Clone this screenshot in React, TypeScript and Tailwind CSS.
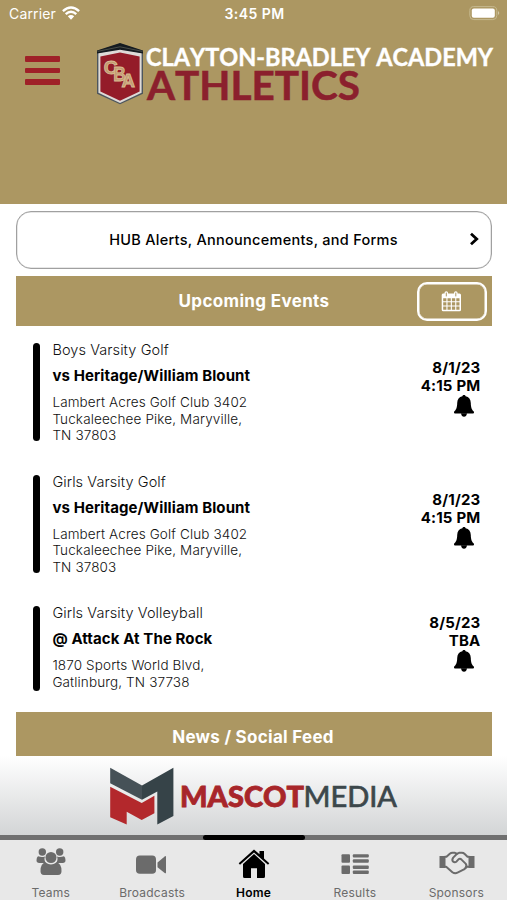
import React from "react";

type GameEvent = {
  team: string;
  opponent: string;
  address: string[];
  date: string;
  time: string;
  rowSize: string;
  dateOffset: string;
};

const events: GameEvent[] = [
  {
    team: "Boys Varsity Golf",
    opponent: "vs Heritage/William Blount",
    address: ["Lambert Acres Golf Club 3402", "Tuckaleechee Pike, Maryville,", "TN 37803"],
    date: "8/1/23",
    time: "4:15 PM",
    rowSize: "h-[98px] mb-[33.5px]",
    dateOffset: "pt-4",
  },
  {
    team: "Girls Varsity Golf",
    opponent: "vs Heritage/William Blount",
    address: ["Lambert Acres Golf Club 3402", "Tuckaleechee Pike, Maryville,", "TN 37803"],
    date: "8/1/23",
    time: "4:15 PM",
    rowSize: "h-[98px] mb-[33.5px]",
    dateOffset: "pt-4",
  },
  {
    team: "Girls Varsity Volleyball",
    opponent: "@ Attack At The Rock",
    address: ["1870 Sports World Blvd,", "Gatlinburg, TN 37738"],
    date: "8/5/23",
    time: "TBA",
    rowSize: "h-[85px] mb-[21px]",
    dateOffset: "pt-[8px]",
  },
];

function Bell() {
  return (
    <svg width="22" height="22" viewBox="0 0 22 22" className="mr-[5.5px] fill-black">
      <path d="M11 0C12 0 12.6.7 12.6 1.3C16 2 17.7 4.6 17.8 8C17.9 12.7 18.8 14.8 21 16.8V17.6Q21 18.6 20 18.6H2Q1 18.6 1 17.6V16.8C3.2 14.8 4.1 12.7 4.2 8C4.3 4.6 6 2 9.4 1.3C9.4.7 10 0 11 0Z" />
      <path d="M8 18.3H14C13.7 20.8 12.5 21.8 11 21.8S8.3 20.8 8 18.3Z" />
    </svg>
  );
}

function Calendar() {
  return (
    <svg width="21" height="21" viewBox="0 0 21 21" className="block">
      <path
        fillRule="evenodd"
        fill="#fff"
        d="M2 2.6H3.5V2A1.8 1.8 0 0 1 7.1 2V2.6H13V2A1.8 1.8 0 0 1 16.6 2V2.6H18.5A1.5 1.5 0 0 1 20 4.1V18.7A1.5 1.5 0 0 1 18.5 20.2H2.2A1.5 1.5 0 0 1 .7 18.7V4.1A1.5 1.5 0 0 1 2 2.6ZM2.2 7.3V10.2H5.4V7.3ZM6.5 7.3V10.2H9.8V7.3ZM10.9 7.3V10.2H14.2V7.3ZM15.3 7.3V10.2H18.5V7.3ZM2.2 11.3V14.4H5.4V11.3ZM6.5 11.3V14.4H9.8V11.3ZM10.9 11.3V14.4H14.2V11.3ZM15.3 11.3V14.4H18.5V11.3ZM2.2 15.5V18.7H5.4V15.5ZM6.5 15.5V18.7H9.8V15.5ZM10.9 15.5V18.7H14.2V15.5ZM15.3 15.5V18.7H18.5V15.5Z"
      />
      <path d="M5.3 2V5M14.8 2V5" stroke="#ac9762" strokeWidth="1" strokeLinecap="round" />
    </svg>
  );
}

function AcademyLogo() {
  return (
    <svg width="400" height="72" viewBox="96 42 400 72" className="block overflow-visible">
      <path d="M97 51L120 43.5L143 51V93.8L120 104.3L97 93.8Z" fill="#4d565d" />
      <path d="M98.4 53L120 48.5L141.6 53V92.7L120 102.9L98.4 92.7Z" fill="#dedbd8" />
      <path d="M97 50.4L120 43L143 50.4V53.6L120 49.8L97 53.6Z" fill="#151b20" />
      <path d="M97.5 51.4L120 46.8L142.5 51.4" fill="none" stroke="#6b6e64" strokeWidth="0.6" />
      <path d="M100.4 56.4L120 52.5L139.6 56.4V91.4L120 100.7L100.4 91.4Z" fill="#941c29" />
      <g fontFamily="Liberation Sans, sans-serif" fontWeight="700" fill="#c29a70" stroke="#d9bd94" strokeWidth="0.9">
        <text x="103.8" y="74.3" fontSize="19" textLength="14" lengthAdjust="spacingAndGlyphs">C</text>
        <text x="113.2" y="81" fontSize="20" textLength="12.5" lengthAdjust="spacingAndGlyphs">B</text>
        <text x="121.5" y="87.3" fontSize="19" textLength="13.5" lengthAdjust="spacingAndGlyphs">A</text>
      </g>
      <g fontFamily="Lato, sans-serif" fontWeight="700" style={{ fontKerning: "none" }}>
        <text x="146" y="66.3" fontSize="24.3" fill="#fff" stroke="#fff" strokeWidth="0.4" textLength="347" lengthAdjust="spacingAndGlyphs">
          CLAYTON-BRADLEY ACADEMY
        </text>
        <text x="147" y="100" fontSize="39.5" fill="#8b202d" stroke="#8b202d" strokeWidth="0.5" textLength="213" lengthAdjust="spacingAndGlyphs">
          ATHLETICS
        </text>
      </g>
    </svg>
  );
}

function MascotLogo() {
  return (
    <svg width="290" height="60" viewBox="109 766 290 60" className="block">
      <path d="M110.2 767.7L142 785.5V799.8L110.2 783.3Z" fill="#465157" />
      <path d="M142 785.5L173.4 767.7V816L157.3 824.4V791.6L142 799.8Z" fill="#364348" />
      <path d="M110.2 786.8L141.7 803L154.4 795.8V813.3L141.7 820L126.7 811.7V824.4L110.2 817.3Z" fill="#b3282c" />
      <text x="180" y="806.5" fontFamily="Lato, sans-serif" fontWeight="900" fontSize="28.3" fill="#a8262a" stroke="#a8262a" strokeWidth="0.8" textLength="124" lengthAdjust="spacingAndGlyphs" style={{ fontKerning: "none" }}>
        MASCOT
      </text>
      <text x="303.5" y="806.5" fontFamily="Lato, sans-serif" fontWeight="400" fontSize="28.3" fill="#3c474b" stroke="#3c474b" strokeWidth="0.7" textLength="93.5" lengthAdjust="spacingAndGlyphs">
        MEDIA
      </text>
    </svg>
  );
}

function TeamsIcon() {
  return (
    <svg width="30" height="28" viewBox="0 0 30 28" fill="currentColor" className="ml-px">
      <circle cx="6.3" cy="4" r="3.7" />
      <circle cx="23.7" cy="4" r="3.7" />
      <path d="M2 8.3Q6 9.5 9 8.4Q7.5 12.3 10.2 15H3.2Q.5 15 .5 12.3Q.5 9.3 2 8.3Z" />
      <path d="M28 8.3Q24 9.5 21 8.4Q22.5 12.3 19.8 15H26.8Q29.5 15 29.5 12.3Q29.5 9.3 28 8.3Z" />
      <circle cx="15" cy="9.5" r="5.5" />
      <path d="M9.6 14.6Q15 18.3 20.4 14.6Q25.5 15 25.5 23.3Q25.5 27 22 27H8Q4.5 27 4.5 23.3Q4.5 15 9.6 14.6Z" />
    </svg>
  );
}

function VideoIcon() {
  return (
    <svg width="32" height="28" viewBox="0 0 32 28" fill="currentColor" className="mr-[2px]">
      <rect x="1" y="7.6" width="20" height="18.2" rx="3.8" />
      <path d="M22.5 14.5L29.7 8.4Q31 7.6 31 9V24.4Q31 25.8 29.7 25.1L22.5 19.2Z" />
    </svg>
  );
}

function HomeIcon() {
  return (
    <svg width="32" height="30" viewBox="0 0 32 30" fill="currentColor" className="mt-[4px] ml-px">
      <path d="M16 .5L21.5 5.3V2H26V9.5L31.3 14.3L30 15.8L16 3.4L2 15.8L.7 14.3Z" />
      <path d="M16 5L27 15V27.5Q27 29 25.5 29H19V19.2H13V29H6.5Q5 29 5 27.5V15Z" />
    </svg>
  );
}

function ResultsIcon() {
  return (
    <svg width="30" height="28" viewBox="0 0 30 28" fill="currentColor" className="mt-px">
      <rect x="1.5" y="5.2" width="8.5" height="8.5" rx="1" />
      <rect x="1.5" y="16.5" width="8.5" height="8.5" rx="1" />
      <rect x="12.8" y="5.2" width="16" height="3.4" rx="1" />
      <rect x="12.8" y="10.3" width="16" height="3.4" rx="1" />
      <rect x="12.8" y="16.5" width="16" height="3.4" rx="1" />
      <rect x="12.8" y="21.6" width="16" height="3.4" rx="1" />
    </svg>
  );
}

function HandshakeIcon() {
  return (
    <svg width="36" height="24" viewBox="0 0 36 24" fill="none" stroke="currentColor" strokeWidth="2" strokeLinejoin="round" strokeLinecap="round" className="mt-px ml-px">
      <path d="M.5 5H6.5V17H.5ZM35.5 5H29.5V17H35.5Z" fill="currentColor" stroke="none" />
      <path d="M6 5.8H7.5L10.8 2.8Q12 1.8 13.5 1.8H16L18 2.8L20 1.8H22.8Q24.5 1.8 25.7 3L28.5 5.8H30" />
      <path d="M6 15.8H7.2L13.4 21.2Q16 23 18.5 21.6L25 18.4L28 15.8H30" />
      <path d="M18 2.8L14.2 6.6Q12.6 8.8 14 10.5Q15.8 12 17.6 10.4L19.5 8.3Q21 7.2 22.5 8.6L26.6 12.6Q28.2 14.6 26.6 16.6" />
    </svg>
  );
}

const tabs = [
  { label: "Teams", icon: <TeamsIcon />, active: false },
  { label: "Broadcasts", icon: <VideoIcon />, active: false },
  { label: "Home", icon: <HomeIcon />, active: true },
  { label: "Results", icon: <ResultsIcon />, active: false },
  { label: "Sponsors", icon: <HandshakeIcon />, active: false },
];

export default function App() {
  return (
    <div className="flex h-[900px] w-[507px] flex-col overflow-hidden bg-white font-['Inter',sans-serif] text-black">
      <header className="h-[203.5px] shrink-0 bg-[#ac9762]">
        <div className="grid h-[28px] grid-cols-3 items-center pr-[7px] pl-[9px] text-[14px] leading-[28px] text-white">
          <div className="flex items-center gap-[6px]">
            <span className="tracking-[0.15px]">Carrier</span>
            <svg width="18" height="14" viewBox="0 0 18 14" fill="none" stroke="#fff" strokeWidth="2.4" className="-mt-[2px]">
              <path d="M.9 5.2Q9-2.2 17.1 5.2" />
              <path d="M3.7 8.2Q9 3.5 14.3 8.2" />
              <path d="M5.8 10.3Q9 7.6 12.2 10.3L9 13.8Z" fill="#fff" stroke="none" />
            </svg>
          </div>
          <span className="text-center font-semibold tracking-[0.45px] whitespace-nowrap">3:45 PM</span>
          <svg width="31" height="16" viewBox="0 0 31 16" className="-mt-[2px] justify-self-end">
            <rect x=".8" y="1.6" width="27" height="13" rx="4" fill="none" stroke="#c6b98f" />
            <rect x="2.8" y="3.6" width="23" height="9.2" rx="2" fill="#fff" />
            <path d="M29 6Q31.5 8 29 10Z" fill="#d0c5a5" />
          </svg>
        </div>
        <div className="flex pt-[14px] pl-[25px]">
          <div className="mt-[14px] mr-[36px] flex w-[35px] shrink-0 flex-col gap-[5.8px]">
            <span className="h-[5.8px] rounded-[1px] bg-[#9f2128]" />
            <span className="h-[5.8px] rounded-[1px] bg-[#9f2128]" />
            <span className="h-[5.8px] rounded-[1px] bg-[#9f2128]" />
          </div>
          <AcademyLogo />
        </div>
      </header>

      <main className="h-[552.5px] shrink-0 overflow-hidden pt-[7.5px] pr-[15px] pl-4">
        <button className="flex h-[58px] w-full items-center rounded-[15px] border-[1.5px] border-[#a0a0a0] pr-[11px] pb-px pl-[10px] text-[14.5px] font-medium shadow-[inset_0_0_0_0.5px_#d0d0d0]">
          <span className="flex-1 pl-[11px] text-center tracking-[0.28px]">HUB Alerts, Announcements, and Forms</span>
          <svg width="11" height="14" viewBox="0 0 11 14" fill="none" stroke="#000" strokeWidth="2.8" className="-mt-px">
            <path d="M2 1.8L7.7 7L2 12.2" />
          </svg>
        </button>

        <section className="mt-[7px] grid h-[50px] grid-cols-[1fr_auto_1fr] items-center bg-[#ac9762] text-[17px] font-bold text-white">
          <h2 className="col-start-2 pt-[2px] tracking-[0.35px]">Upcoming Events</h2>
          <button className="mr-[5px] flex h-[39px] w-[70px] items-center justify-center justify-self-end rounded-[10px] border-2 border-white pr-[2px] shadow-[inset_0_0_0_0.5px_#fff]">
            <Calendar />
          </button>
        </section>

        <ul className="pt-[17px] pr-[11.5px] pl-[17px]">
          {events.map((event) => (
            <li key={event.team} className={`flex ${event.rowSize}`}>
              <span className="w-[7px] shrink-0 rounded-full bg-black" />
              <div className="flex-1 pl-[12.4px] whitespace-nowrap">
                <p className="text-[14.5px] leading-[14px] font-light tracking-[0.08px] text-[#111]">{event.team}</p>
                <p className="mt-[10px] text-[15px] leading-[18px] font-bold tracking-[0.1px]">{event.opponent}</p>
                <div className="mt-[9px] text-[13.5px] leading-[16.6px] font-light tracking-[0.13px] text-[#111]">
                  {event.address.map((line) => (
                    <p key={line}>{line}</p>
                  ))}
                </div>
              </div>
              <div className={`flex flex-col items-end text-[15px] leading-[18px] font-bold tracking-[0.2px] ${event.dateOffset}`}>
                <span>{event.date}</span>
                <span>{event.time}</span>
                <Bell />
              </div>
            </li>
          ))}
        </ul>

        <section className="flex h-[50px] items-center justify-center bg-[#ac9762] pt-[2px] text-[17px] font-bold tracking-[0.28px] text-white">
          <h2 className="pr-[2px]">News / Social Feed</h2>
        </section>
      </main>

      <footer className="flex flex-1 flex-col">
        <div className="flex h-[79px] shrink-0 justify-center bg-linear-to-b from-white to-[#d3d5d6] pt-[10px]">
          <MascotLogo />
        </div>
        <div className="flex h-[5px] shrink-0 justify-center bg-[#707070]">
          <span className="w-[102px] rounded-full bg-black" />
        </div>
        <nav className="grid flex-1 grid-cols-5 bg-[#e8e8e8]">
          {tabs.map((tab) => (
            <div
              key={tab.label}
              className={`flex flex-col items-center text-[12px] tracking-[0.2px] ${tab.active ? "font-semibold text-black" : "text-[#6b6b6b]"}`}
            >
              <div className="flex h-[44px] items-center justify-center">{tab.icon}</div>
              <span className="pt-px leading-[16px]">{tab.label}</span>
            </div>
          ))}
        </nav>
      </footer>
    </div>
  );
}
